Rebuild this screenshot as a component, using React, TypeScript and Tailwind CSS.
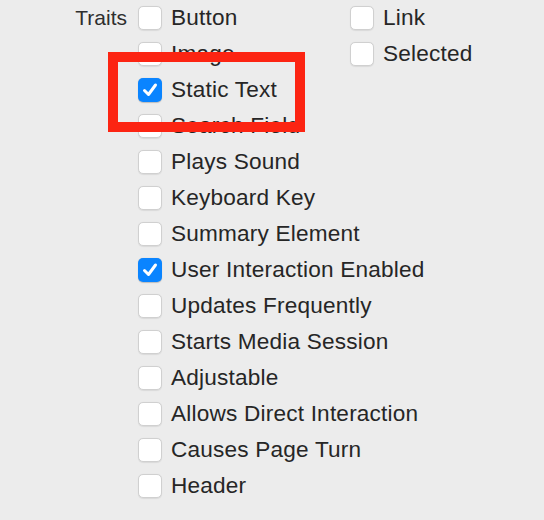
import React from 'react'

interface Trait {
  label: string
  checked?: boolean
}

const leftTraits: Trait[] = [
  { label: 'Button' },
  { label: 'Image' },
  { label: 'Static Text', checked: true },
  { label: 'Search Field' },
  { label: 'Plays Sound' },
  { label: 'Keyboard Key' },
  { label: 'Summary Element' },
  { label: 'User Interaction Enabled', checked: true },
  { label: 'Updates Frequently' },
  { label: 'Starts Media Session' },
  { label: 'Adjustable' },
  { label: 'Allows Direct Interaction' },
  { label: 'Causes Page Turn' },
  { label: 'Header' },
]

const rightTraits: Trait[] = [
  { label: 'Link' },
  { label: 'Selected' },
]

function Checkbox ({ checked }: { checked?: boolean }) {
  if (checked) {
    return (
      <div className="shrink-0 w-6 h-6 rounded-[5px] bg-[#0a84ff] flex items-center justify-center shadow-[0_0.5px_1px_rgba(0,0,0,0.2)]">
        <svg width="20" height="20" viewBox="0 0 20 20" fill="none">
          <path d="M4.5 10.5 L8.5 14.5 L15.5 5" stroke="white" strokeWidth="3" strokeLinecap="round" strokeLinejoin="round" />
        </svg>
      </div>
    )
  }
  return (
    <div className="shrink-0 w-6 h-6 rounded-[5px] bg-white border border-[#d0d0d0] shadow-[0_0.5px_1px_rgba(0,0,0,0.08)]" />
  )
}

function TraitRow ({ trait }: { trait: Trait }) {
  return (
    <div className="h-9 flex items-center gap-[9px]">
      <Checkbox checked={trait.checked} />
      <span className="whitespace-nowrap text-[22.6px] tracking-[0.2px] text-[#262626] leading-none">{trait.label}</span>
    </div>
  )
}

export default function App () {
  return (
    <div
      className="relative w-[544px] h-[520px] bg-[#ececec] overflow-hidden"
      style={{ fontFamily: '"Liberation Sans", Arial, sans-serif' }}
    >
      <div className="flex">
        <div className="shrink-0 w-[127px] h-9 flex items-center justify-end text-[21px] text-[#2e2e2e]">
          Traits
        </div>
        <div className="shrink-0 ml-[11px] w-[212px] flex flex-col">
          {leftTraits.map((t) => (
            <TraitRow key={t.label} trait={t} />
          ))}
        </div>
        <div className="flex flex-col">
          {rightTraits.map((t) => (
            <TraitRow key={t.label} trait={t} />
          ))}
        </div>
      </div>

      {/* annotation box */}
      <div className="absolute left-[108px] top-[52px] w-[197px] h-[80px] border-[10px] border-[#fc2412]" />
    </div>
  )
}
